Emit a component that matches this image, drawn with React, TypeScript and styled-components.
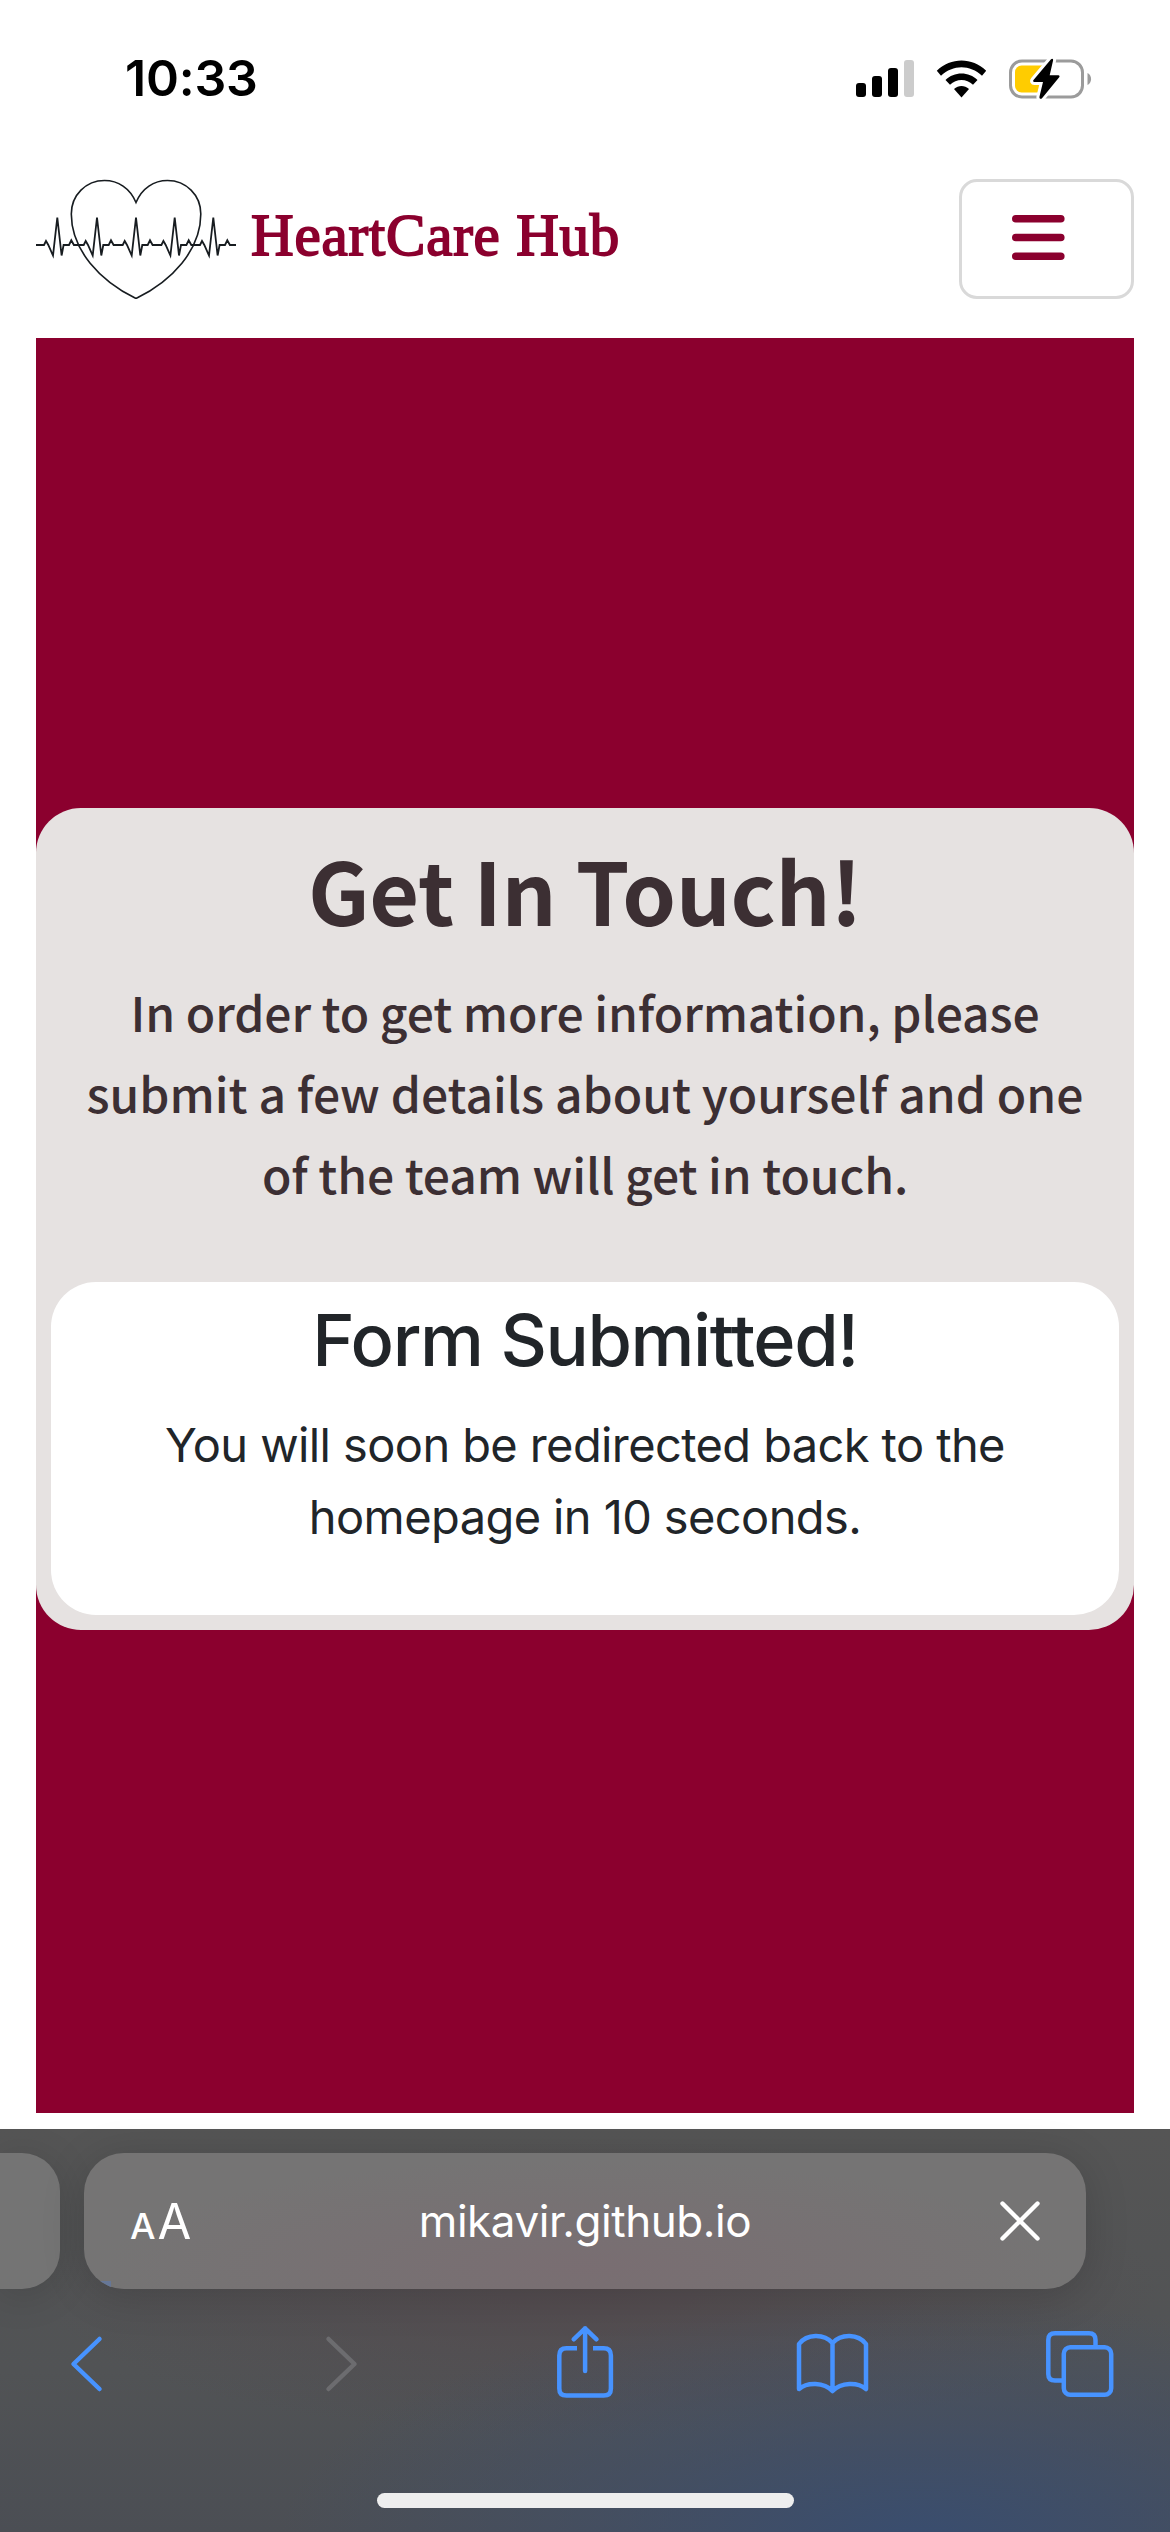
import React from 'react';
import styled, { createGlobalStyle } from 'styled-components';

const MAROON = '#8b002e';
const BLUE = '#4793ff';

const GlobalStyle = createGlobalStyle`
  * { box-sizing: border-box; }
  html, body { margin: 0; padding: 0; background: #fff; }
  svg { display: block; flex: none; }
`;

const Screen = styled.div`
  width: 1170px;
  height: 2532px;
  display: flex;
  flex-direction: column;
  background: #fff;
  overflow: hidden;
  font-family: Inter, 'Liberation Sans', sans-serif;
`;

const StatusBar = styled.header`
  height: 179px;
  flex: none;
  display: flex;
  justify-content: space-between;
  align-items: flex-start;
  padding: 48px 78px 0 125px;
`;

const Clock = styled.time`
  font-size: 50px;
  line-height: 60px;
  font-weight: 600;
  letter-spacing: -0.2px;
  color: #000;
`;

const StatusIcons = styled.div`
  display: flex;
  align-items: center;
  gap: 22px;
  padding-top: 9px;
`;

const NavBar = styled.nav`
  height: 120px;
  flex: none;
  display: flex;
  justify-content: space-between;
  margin: 0 36px 39px;
`;

const Brand = styled.a`
  display: flex;
  align-items: center;
  gap: 15px;
  color: ${MAROON};
`;

const BrandName = styled.span`
  font-family: 'Liberation Serif', serif;
  font-size: 59px;
  line-height: 68px;
  font-weight: 400;
  letter-spacing: 0.8px;
  -webkit-text-stroke: 1.8px ${MAROON};
  white-space: nowrap;
  padding-bottom: 8px;
`;

const MenuButton = styled.button`
  width: 175px;
  height: 120px;
  padding: 0 0 0 50px;
  display: flex;
  align-items: center;
  border: 3px solid #d9d9d9;
  border-radius: 18px;
  background: #fff;
`;

const Hero = styled.main`
  height: 1775px;
  flex: none;
  margin: 0 36px 16px;
  padding-top: 470px;
  background: ${MAROON};
`;

const Card = styled.section`
  height: 822px;
  padding: 31px 15px 15px;
  display: flex;
  flex-direction: column;
  border-radius: 45px;
  background: #e6e2e1;
  text-align: center;
`;

const Title = styled.h1`
  margin: 0 0 32px;
  font-family: 'Noto Sans CJK SC', 'Noto Sans', sans-serif;
  font-size: 86px;
  line-height: 100px;
  font-weight: 700;
  letter-spacing: -0.2px;
  color: #3c2f33;
`;

const Intro = styled.p`
  margin: 0;
  height: 311px;
  font-family: 'Noto Sans CJK SC', 'Noto Sans', sans-serif;
  font-size: 48px;
  line-height: 81px;
  font-weight: 500;
  color: #3c2f33;
`;

const Line = styled.span<{ $spacing?: number }>`
  display: block;
  white-space: nowrap;
  letter-spacing: ${(p) => p.$spacing ?? 0}px;
`;

const Notice = styled.div`
  flex: 1;
  padding-top: 13px;
  border-radius: 45px;
  background: #fff;
  color: #212529;
`;

const NoticeTitle = styled.h2`
  margin: 0 0 24px;
  font-size: 72px;
  line-height: 90px;
  font-weight: 500;
  letter-spacing: -1.4px;
`;

const NoticeText = styled.p`
  margin: 0;
  font-size: 47px;
  line-height: 72px;
`;

const BrowserChrome = styled.footer`
  height: 403px;
  flex: none;
  display: flex;
  flex-direction: column;
  background:
    radial-gradient(ellipse 640px 240px at 920px 410px, rgba(56, 77, 112, 0.95), rgba(62, 78, 106, 0.55) 50%, rgba(74, 80, 96, 0) 100%),
    radial-gradient(ellipse 560px 150px at 600px 160px, rgba(84, 70, 75, 0.6), rgba(84, 74, 77, 0) 100%),
    linear-gradient(#555555 0%, #515355 60%, #4b4e54 100%);
`;

const TabStrip = styled.div`
  display: flex;
  gap: 24px;
  padding-top: 24px;
`;

const PreviousTab = styled.div`
  width: 60px;
  height: 136px;
  border-radius: 0 38px 38px 0;
  background: #747474;
  box-shadow: 0 6px 40px rgba(0, 0, 0, 0.14);
`;

const AddressBar = styled.div`
  position: relative;
  width: 1002px;
  height: 136px;
  display: flex;
  align-items: center;
  justify-content: space-between;
  padding: 0 46px;
  border-radius: 40px;
  overflow: hidden;
  color: #fff;
  background:
    radial-gradient(ellipse 480px 110px at 500px 115px, rgba(122, 108, 113, 0.8), rgba(120, 112, 114, 0) 100%),
    #757474;
`;

const AddressShadow = styled.div`
  border-radius: 40px;
  box-shadow: 0 6px 44px rgba(0, 0, 0, 0.16);
`;

const LoadProgress = styled.div`
  position: absolute;
  left: 0;
  bottom: 2px;
  width: 27px;
  height: 6px;
  background: #667797;
`;

const TextSize = styled.span`
  display: flex;
  align-items: baseline;
  gap: 2px;
  width: 90px;
  padding-top: 5px;
  line-height: 60px;
`;

const Glyph = styled.span<{ $size: number; $weight: number }>`
  font-size: ${(p) => p.$size}px;
  font-weight: ${(p) => p.$weight};
`;

const Host = styled.span`
  font-size: 44px;
  line-height: 60px;
  letter-spacing: -0.45px;
`;

const CloseSlot = styled.span`
  width: 90px;
  display: flex;
  justify-content: flex-end;
`;

const ToolBar = styled.div`
  height: 76px;
  margin-top: 34px;
  padding-left: 69px;
  display: grid;
  grid-template-columns: 255px 231px 239px 251px 70px;
`;

const HomeIndicator = styled.div`
  width: 417px;
  height: 15px;
  margin: 94px auto 0 377px;
  border-radius: 8px;
  background: #eeeeee;
`;

const beats = [57.3, 97, 136, 174.7, 213.3];

const ecg =
  'M36 245H44' +
  beats
    .map(
      (x) =>
        `L${x - 13.3} 245L${x - 11.3} 241L${x - 9} 245L${x - 4.3} 255.5L${x} 217.5L${x + 4.3} 255.5L${x + 6.3} 245H${x + 11.7}L${x + 14} 240.3L${x + 16.6} 245`,
    )
    .join('') +
  'H236';

const HeartLogo = () => (
  <svg width="200" height="120" viewBox="36 179 200 120" fill="none" stroke="#171c20" strokeWidth="1.8">
    <path d="M136 202.5C130 188 118 180.5 104.500 180.500C86 180.500 71.300 195 71.300 214C71.300 250 100 281 136 298.500C172 281 200.800 250 200.800 214C200.800 195 186 180.500 167.500 180.500C154 180.500 142 188 136 202.500Z" strokeWidth="1.6" />
    <path d={ecg} />
  </svg>
);

const Signal = () => (
  <svg width="58" height="38" viewBox="856 59 58 38">
    <rect x="856" y="82" width="10" height="14" rx="3" />
    <rect x="872" y="75" width="10" height="21" rx="3" />
    <rect x="888" y="67" width="10" height="29" rx="3" />
    <rect x="904" y="59" width="10" height="37" rx="3" fill="#cccccc" />
  </svg>
);

const Wifi = () => (
  <svg width="51" height="38" viewBox="936 58.500 51 38">
    <path d="M936.800 69.200C951 55.500 972 55.500 986.200 69.200L982 74.200C970 62.800 953 62.800 941 74.200Z" />
    <path d="M945.500 78.500C954 69.700 969 69.700 977.500 78.500L973 83.300C966.500 77 956.500 77 950 83.300Z" />
    <path d="M954 87.500C958.500 83.500 964.500 83.500 969 87.500L961.500 96Z" />
  </svg>
);

const Battery = () => (
  <svg width="83" height="44" viewBox="1009 55.500 83 44">
    <rect x="1010.500" y="59.500" width="72" height="36" rx="11.500" fill="none" stroke="#9b9b9b" strokeWidth="3" />
    <path d="M1087.500 71.500C1092.300 73.500 1092.300 81.500 1087.500 83.500Z" fill="#9b9b9b" />
    <rect x="1015" y="64" width="38" height="27" rx="6.500" fill="#ffcc00" />
    <path d="M1047 64H1056V91H1040Z" fill="#fff" />
    <path
      d="M1050.800 58L1033.500 78.500C1032.700 79.500 1033.200 80.500 1034.400 80.500H1043L1039.500 95C1039 97.500 1041 98 1042.200 96.500L1059.200 75.800C1060 74.800 1059.500 73.800 1058.400 73.800H1049.700L1053 59.300C1053.600 57 1052 56.500 1050.800 58Z"
      stroke="#fff"
      strokeWidth="6"
      paintOrder="stroke"
    />
  </svg>
);

const MenuIcon = () => (
  <svg width="54" height="48" viewBox="0 0 54 48" stroke={MAROON} strokeWidth="7.600" strokeLinecap="round">
    <path d="M3.800 3.800H48.800M3.800 22.500H48.800M3.800 41.300H48.800" />
  </svg>
);

const CloseIcon = () => (
  <svg width="40" height="40" viewBox="0 0 40 40" stroke="#fff" strokeWidth="4.400" strokeLinecap="round">
    <path d="M2.500 2.500L37.500 37.500M37.500 2.500L2.500 37.500" />
  </svg>
);

const Icon = styled.svg<{ $disabled?: boolean }>`
  fill: none;
  stroke: ${(p) => (p.$disabled ? '#6c6c6f' : BLUE)};
  stroke-width: 4.5;
  stroke-linecap: round;
  stroke-linejoin: round;
`;

export default function App() {
  return (
    <>
      <GlobalStyle />
      <Screen>
        <StatusBar>
          <Clock>10:33</Clock>
          <StatusIcons>
            <Signal />
            <Wifi />
            <Battery />
          </StatusIcons>
        </StatusBar>
        <NavBar>
          <Brand>
            <HeartLogo />
            <BrandName>HeartCare Hub</BrandName>
          </Brand>
          <MenuButton aria-label="Menu">
            <MenuIcon />
          </MenuButton>
        </NavBar>
        <Hero>
          <Card>
            <Title>Get In Touch!</Title>
            <Intro>
              <Line $spacing={-0.1}>In order to get more information, please</Line>
              <Line>submit a few details about yourself and one</Line>
              <Line $spacing={-0.1}>of the team will get in touch.</Line>
            </Intro>
            <Notice>
              <NoticeTitle>Form Submitted!</NoticeTitle>
              <NoticeText>
                <Line $spacing={-0.6}>You will soon be redirected back to the</Line>
                <Line $spacing={-0.6}>homepage in 10 seconds.</Line>
              </NoticeText>
            </Notice>
          </Card>
        </Hero>
        <BrowserChrome>
          <TabStrip>
            <PreviousTab />
            <AddressShadow>
              <AddressBar>
                <TextSize>
                  <Glyph $size={36} $weight={500}>A</Glyph>
                  <Glyph $size={49} $weight={400}>A</Glyph>
                </TextSize>
                <Host>mikavir.github.io</Host>
                <CloseSlot>
                  <CloseIcon />
                </CloseSlot>
                <LoadProgress />
              </AddressBar>
            </AddressShadow>
          </TabStrip>
          <ToolBar>
            <Icon width="36" height="76" viewBox="69 2323 36 76">
              <path d="M99.500 2339L73.500 2364L99.500 2389" />
            </Icon>
            <Icon $disabled width="36" height="76" viewBox="324 2323 36 76">
              <path d="M328.500 2339L354.500 2364L328.500 2389" />
            </Icon>
            <Icon width="60" height="76" viewBox="555 2323 60 76">
              <path
                d="M577 2348.300H566.500Q559.300 2348.300 559.300 2355.500V2388.500Q559.300 2395.600 566.500 2395.600H603.700Q610.900 2395.600 610.900 2388.500V2355.500Q610.900 2348.300 603.700 2348.300H593"
                strokeLinecap="butt"
                style={{ strokeLinecap: 'butt' }}
              />
              <path d="M585.100 2371V2328.300M573.700 2339.300L585.100 2328.300L596.500 2339.300" />
            </Icon>
            <Icon width="76" height="76" viewBox="794 2323 76 76">
              <path d="M832.500 2343C824 2333.500 807 2333.500 799 2344V2389C807 2382 824 2382 832.500 2391C841 2382 858 2382 866 2389V2344C858 2333.500 841 2333.500 832.500 2343V2391" />
            </Icon>
            <Icon width="70" height="76" viewBox="1045 2323 70 76">
              <path d="M1062 2380.500H1055Q1048.300 2380.500 1048.300 2374V2340Q1048.300 2333.300 1055 2333.300H1089Q1095.500 2333.300 1095.500 2340V2346" />
              <rect x="1063.800" y="2347.300" width="47.400" height="47.400" rx="6.500" />
            </Icon>
          </ToolBar>
          <HomeIndicator />
        </BrowserChrome>
      </Screen>
    </>
  );
}
